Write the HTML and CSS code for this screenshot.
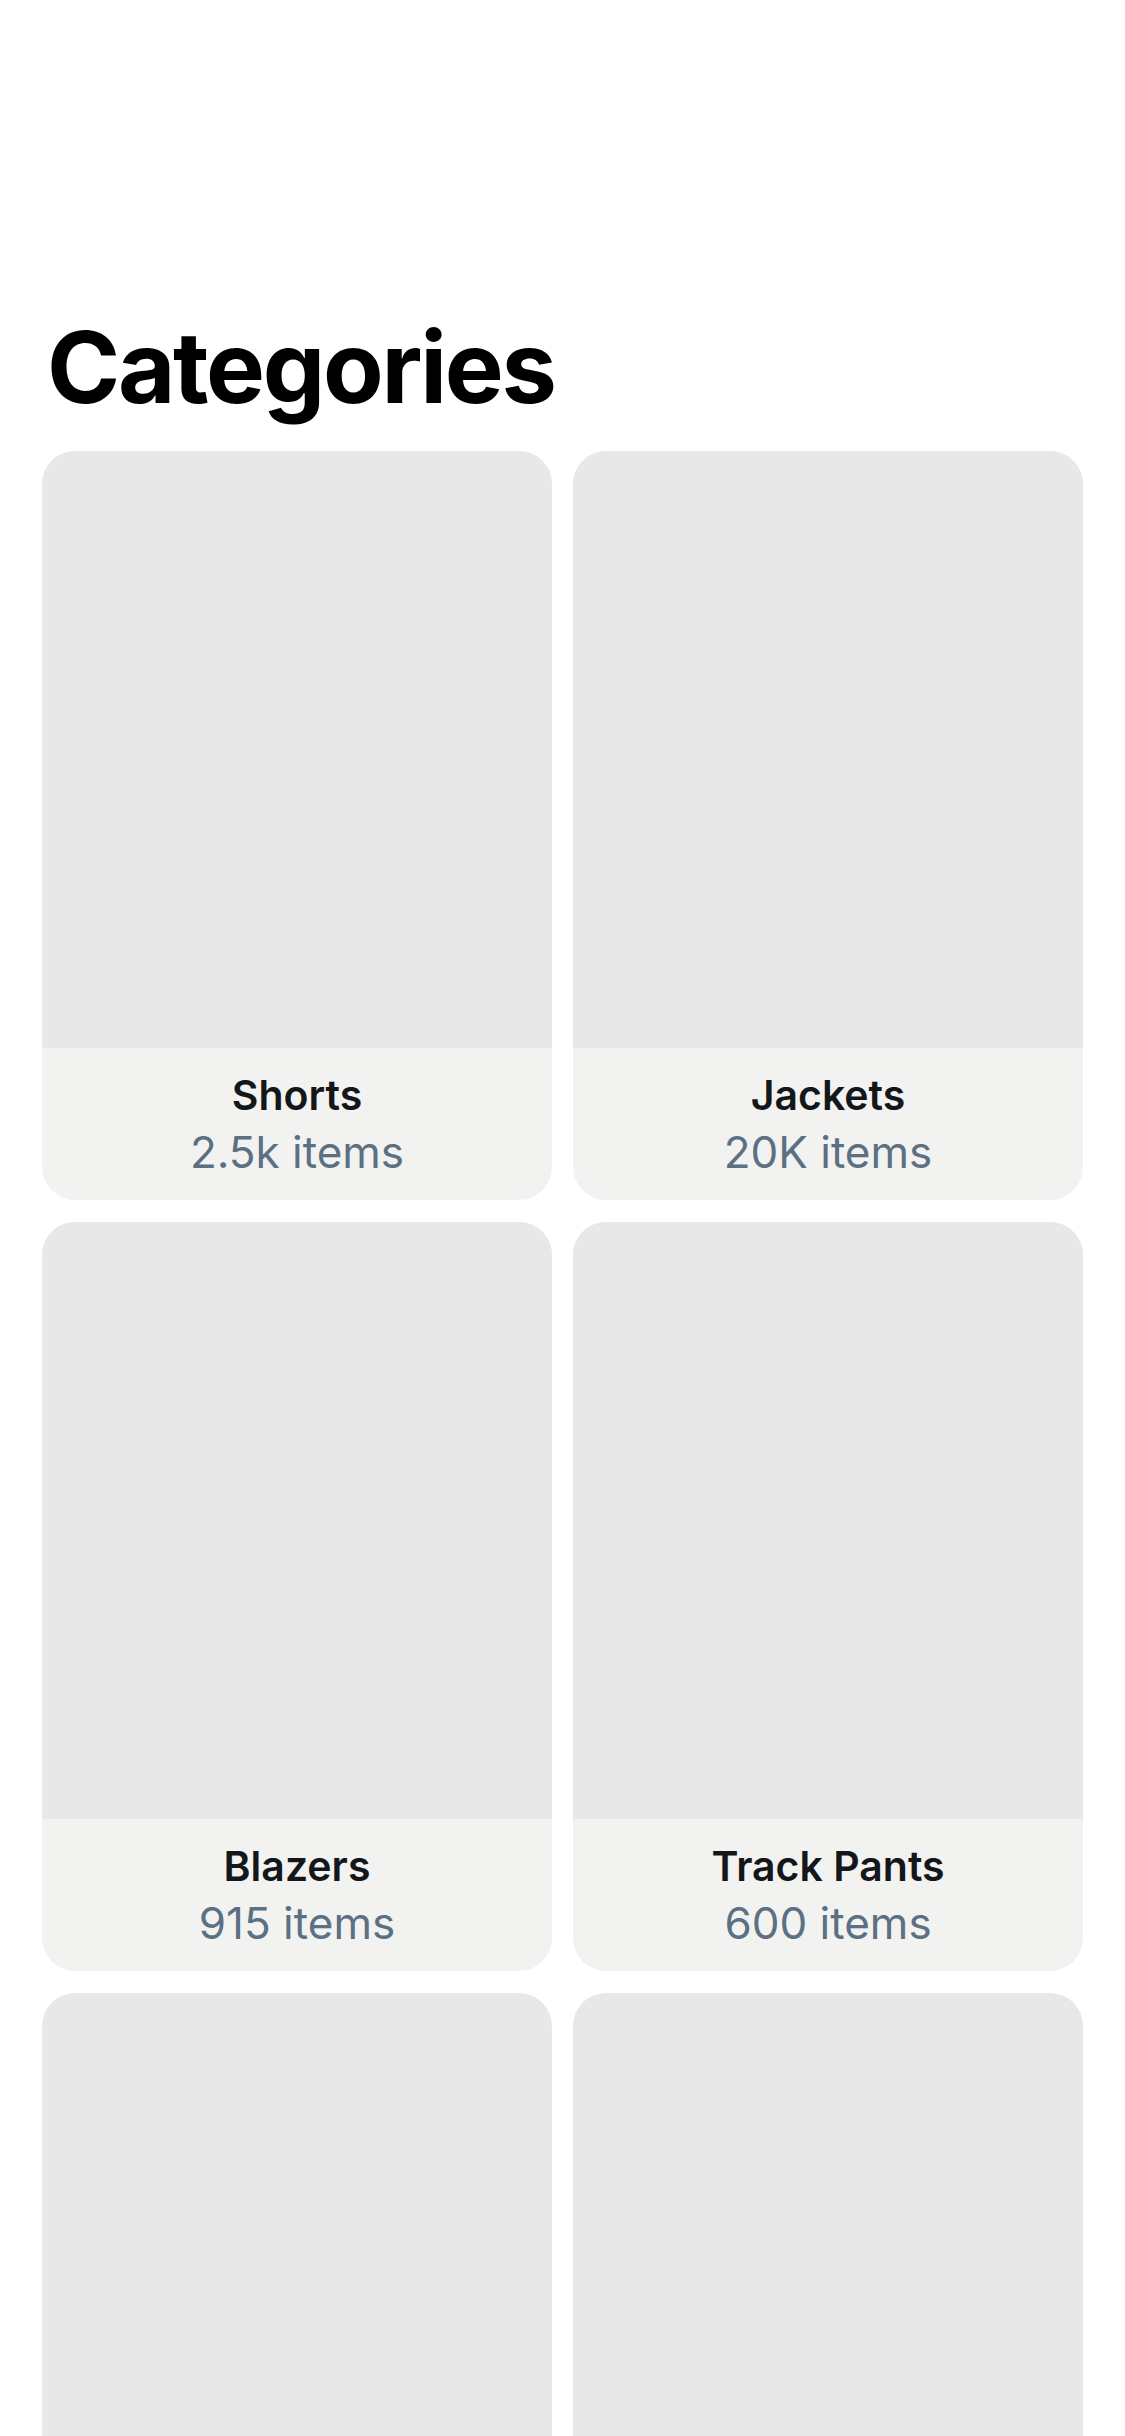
FILE: index.html
```html
<!DOCTYPE html>
<html lang="en">
<head>
<meta charset="utf-8">
<title>Categories</title>
<link rel="stylesheet" href="styles.css">
</head>
<body>
<main class="page">
  <h1 class="title">Categories</h1>
  <div class="grid">
    <div class="card"><div class="thumb"></div><div class="label"><div class="name">Shorts</div><div class="count">2.5k items</div></div></div>
    <div class="card"><div class="thumb"></div><div class="label"><div class="name">Jackets</div><div class="count">20K items</div></div></div>
    <div class="card"><div class="thumb"></div><div class="label"><div class="name">Blazers</div><div class="count">915 items</div></div></div>
    <div class="card"><div class="thumb"></div><div class="label"><div class="name">Track Pants</div><div class="count">600 items</div></div></div>
    <div class="card"><div class="thumb"></div></div>
    <div class="card"><div class="thumb"></div></div>
  </div>
</main>
</body>
</html>
```
FILE: styles.css
```css
html, body {
  margin: 0;
  padding: 0;
  background: #ffffff;
  overflow: hidden;
}
body {
  font-family: Inter, "Noto Sans", sans-serif;
}
.page {
  padding: 308px 42px 0 42px;
}
.title {
  margin: 0 0 24px 5px;
  font-size: 99px;
  line-height: 119px;
  font-weight: 700;
  color: #000000;
  letter-spacing: -2.3px;
}
.grid {
  display: grid;
  grid-template-columns: 1fr 1fr;
  column-gap: 21px;
  row-gap: 22px;
}
.card {
  border-radius: 33px;
  overflow: hidden;
  background: #f2f2f1;
  display: flex;
  flex-direction: column;
}
.thumb {
  height: 597px;
  background: #e8e8e8;
}
.label {
  padding: 23px 0 22px 0;
  text-align: center;
}
.name {
  font-size: 41px;
  line-height: 48px;
  font-weight: 600;
  color: #14171a;
}
.count {
  margin-top: 7px;
  font-size: 44px;
  line-height: 52px;
  font-weight: 400;
  color: #5b7083;
}
```
